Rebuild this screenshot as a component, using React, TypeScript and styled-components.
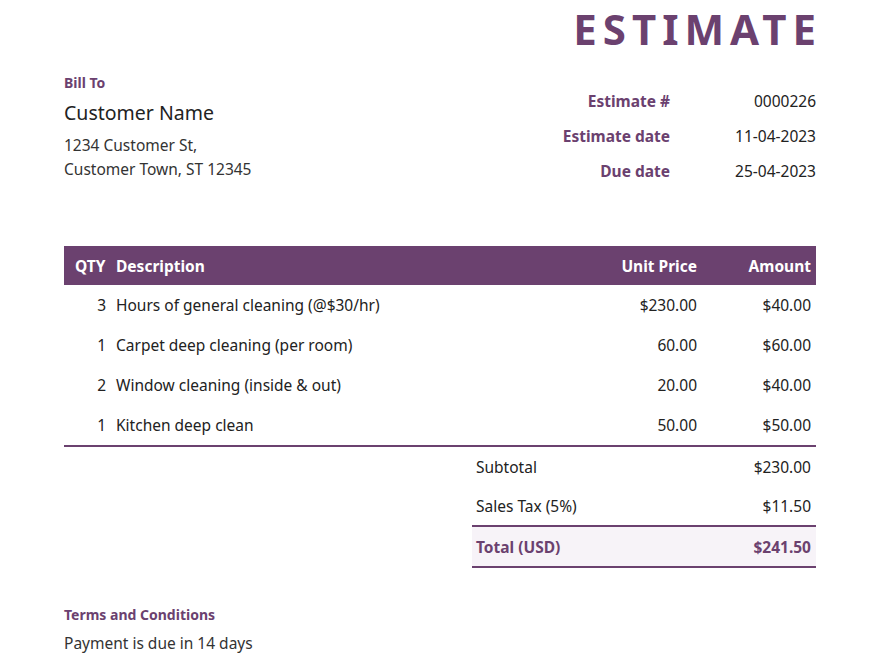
import React from 'react';
import styled, { createGlobalStyle } from 'styled-components';

const purple = '#6b416f';

const Global = createGlobalStyle`
  body { margin: 0; background: #fff; font-family: "Noto Sans", "Open Sans", sans-serif; color: #222; }
`;

const Page = styled.div`
  width: 752px;
  padding: 0 64px;
  height: 660px;
  overflow: hidden;
`;

const Title = styled.h1`
  margin: 0;
  padding-top: 6px;
  text-align: right;
  font-size: 42px;
  line-height: 46px;
  letter-spacing: 6px;
  margin-right: -6px;
  font-weight: 700;
  color: ${purple};
`;

const Top = styled.div`
  display: flex;
  justify-content: space-between;
  margin-top: 22px;
`;

const Label = styled.div`
  color: ${purple};
  font-weight: 700;
  font-size: 14px;
  line-height: 18px;
`;

const Name = styled.div`
  font-size: 19.5px;
  margin-top: 7px;
  line-height: 28px;
`;

const Address = styled.div`
  font-size: 15.5px;
  line-height: 24px;
  margin-top: 6px;
  color: #333;
`;

const Meta = styled.div`
  display: grid;
  grid-template-columns: auto 146px;
  row-gap: 13px;
  margin-top: 16px;
  align-content: start;
  font-size: 15.5px;
  line-height: 22px;
`;

const MetaKey = styled.div`
  color: ${purple};
  font-weight: 700;
  text-align: right;
`;

const MetaVal = styled.div`
  text-align: right;
`;

const Table = styled.div`
  margin-top: 64px;
  font-size: 15.5px;
`;

const Row = styled.div<{ $head?: boolean }>`
  display: grid;
  grid-template-columns: 52px 1fr 140px 114px;
  height: ${p => (p.$head ? 39 : 40)}px;
  align-items: center;
  background: ${p => (p.$head ? purple : 'transparent')};
  color: ${p => (p.$head ? '#fff' : '#222')};
  font-weight: ${p => (p.$head ? 700 : 400)};
  & > div { padding-right: 5px; }
  & > div:first-child { padding-left: 11px; text-align: ${p => (p.$head ? 'left' : 'right')}; padding-right: 10px; }
`;

const Right = styled.div`
  text-align: right;
`;

const Rows = styled.div`
  border-bottom: 2px solid ${purple};
`;

const Totals = styled.div`
  margin-left: 408px;
  font-size: 15.5px;
`;

const TotalRow = styled.div<{ $total?: boolean }>`
  display: flex;
  justify-content: space-between;
  align-items: center;
  height: 39px;
  padding: 0 5px 0 4px;
  ${p => p.$total && `
    background: #f7f3f8;
    color: ${purple};
    font-weight: 700;
    border-top: 2px solid ${purple};
    border-bottom: 2px solid ${purple};
  `}
`;

const Terms = styled.div`
  margin-top: 38px;
`;

const TermsText = styled.div`
  font-size: 15.5px;
  line-height: 26px;
  margin-top: 6px;
  color: #333;
`;

const items = [
  ['3', 'Hours of general cleaning (@$30/hr)', '$230.00', '$40.00'],
  ['1', 'Carpet deep cleaning (per room)', '60.00', '$60.00'],
  ['2', 'Window cleaning (inside & out)', '20.00', '$40.00'],
  ['1', 'Kitchen deep clean', '50.00', '$50.00'],
];

export default function App() {
  return (
    <Page>
      <Global />
      <Title>ESTIMATE</Title>
      <Top>
        <div>
          <Label>Bill To</Label>
          <Name>Customer Name</Name>
          <Address>1234 Customer St,<br />Customer Town, ST 12345</Address>
        </div>
        <Meta>
          <MetaKey>Estimate #</MetaKey><MetaVal>0000226</MetaVal>
          <MetaKey>Estimate date</MetaKey><MetaVal>11-04-2023</MetaVal>
          <MetaKey>Due date</MetaKey><MetaVal>25-04-2023</MetaVal>
        </Meta>
      </Top>
      <Table>
        <Row $head>
          <div>QTY</div><div>Description</div><Right>Unit Price</Right><Right>Amount</Right>
        </Row>
        <Rows>
          {items.map((it, i) => (
            <Row key={i}>
              <div>{it[0]}</div><div>{it[1]}</div><Right>{it[2]}</Right><Right>{it[3]}</Right>
            </Row>
          ))}
        </Rows>
      </Table>
      <Totals>
        <TotalRow><span>Subtotal</span><span>$230.00</span></TotalRow>
        <TotalRow><span>Sales Tax (5%)</span><span>$11.50</span></TotalRow>
        <TotalRow $total><span>Total (USD)</span><span>$241.50</span></TotalRow>
      </Totals>
      <Terms>
        <Label>Terms and Conditions</Label>
        <TermsText>Payment is due in 14 days<br />Please make checks payable to Your Company Inc.</TermsText>
      </Terms>
    </Page>
  );
}
